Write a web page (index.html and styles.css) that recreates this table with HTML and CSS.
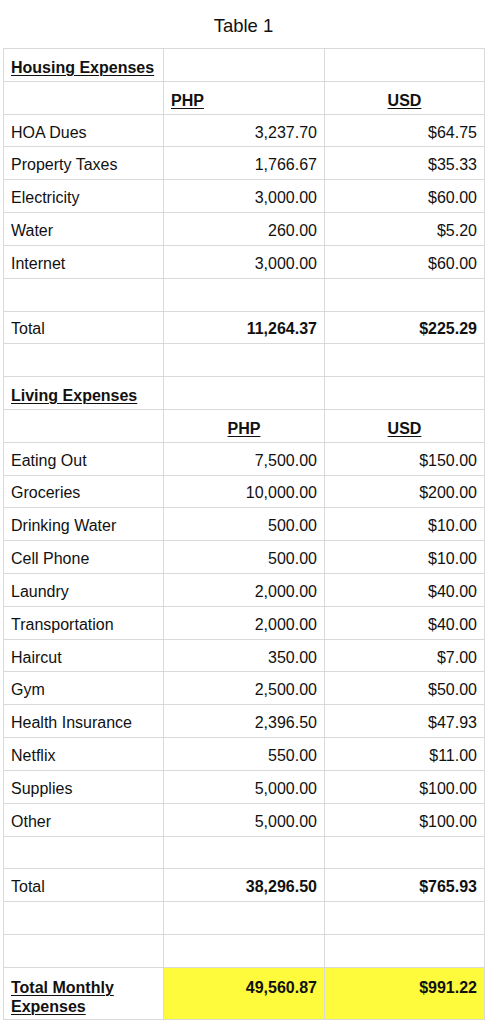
FILE: index.html
```html
<!DOCTYPE html>
<html lang="en">
<head>
<meta charset="utf-8">
<title>Table 1</title>
<link rel="stylesheet" href="styles.css">
</head>
<body>
<div class="title">Table 1</div>
<div class="sheet">
  <div class="cell head"><span class="ul">Housing Expenses</span></div>
  <div class="cell"></div>
  <div class="cell"></div>

  <div class="cell"></div>
  <div class="cell head"><span class="ul">PHP</span></div>
  <div class="cell head center"><span class="ul">USD</span></div>

  <div class="cell">HOA Dues</div>
  <div class="cell num">3,237.70</div>
  <div class="cell num">$64.75</div>

  <div class="cell">Property Taxes</div>
  <div class="cell num">1,766.67</div>
  <div class="cell num">$35.33</div>

  <div class="cell">Electricity</div>
  <div class="cell num">3,000.00</div>
  <div class="cell num">$60.00</div>

  <div class="cell">Water</div>
  <div class="cell num">260.00</div>
  <div class="cell num">$5.20</div>

  <div class="cell">Internet</div>
  <div class="cell num">3,000.00</div>
  <div class="cell num">$60.00</div>

  <div class="cell"></div>
  <div class="cell"></div>
  <div class="cell"></div>

  <div class="cell">Total</div>
  <div class="cell num bold">11,264.37</div>
  <div class="cell num bold">$225.29</div>

  <div class="cell"></div>
  <div class="cell"></div>
  <div class="cell"></div>

  <div class="cell head"><span class="ul">Living Expenses</span></div>
  <div class="cell"></div>
  <div class="cell"></div>

  <div class="cell"></div>
  <div class="cell head center"><span class="ul">PHP</span></div>
  <div class="cell head center"><span class="ul">USD</span></div>

  <div class="cell">Eating Out</div>
  <div class="cell num">7,500.00</div>
  <div class="cell num">$150.00</div>

  <div class="cell">Groceries</div>
  <div class="cell num">10,000.00</div>
  <div class="cell num">$200.00</div>

  <div class="cell">Drinking Water</div>
  <div class="cell num">500.00</div>
  <div class="cell num">$10.00</div>

  <div class="cell">Cell Phone</div>
  <div class="cell num">500.00</div>
  <div class="cell num">$10.00</div>

  <div class="cell">Laundry</div>
  <div class="cell num">2,000.00</div>
  <div class="cell num">$40.00</div>

  <div class="cell">Transportation</div>
  <div class="cell num">2,000.00</div>
  <div class="cell num">$40.00</div>

  <div class="cell">Haircut</div>
  <div class="cell num">350.00</div>
  <div class="cell num">$7.00</div>

  <div class="cell">Gym</div>
  <div class="cell num">2,500.00</div>
  <div class="cell num">$50.00</div>

  <div class="cell">Health Insurance</div>
  <div class="cell num">2,396.50</div>
  <div class="cell num">$47.93</div>

  <div class="cell">Netflix</div>
  <div class="cell num">550.00</div>
  <div class="cell num">$11.00</div>

  <div class="cell">Supplies</div>
  <div class="cell num">5,000.00</div>
  <div class="cell num">$100.00</div>

  <div class="cell">Other</div>
  <div class="cell num">5,000.00</div>
  <div class="cell num">$100.00</div>

  <div class="cell"></div>
  <div class="cell"></div>
  <div class="cell"></div>

  <div class="cell">Total</div>
  <div class="cell num bold">38,296.50</div>
  <div class="cell num bold">$765.93</div>

  <div class="cell"></div>
  <div class="cell"></div>
  <div class="cell"></div>

  <div class="cell"></div>
  <div class="cell"></div>
  <div class="cell"></div>

  <div class="cell grand head"><span class="ul">Total Monthly Expenses</span></div>
  <div class="cell grand num bold hl">49,560.87</div>
  <div class="cell grand num bold hl">$991.22</div>
</div>
</body>
</html>
```
FILE: styles.css
```css
html, body {
  margin: 0;
  padding: 0;
  background: #ffffff;
}

body {
  font-family: "Liberation Sans", Arial, Helvetica, sans-serif;
  color: #111111;
  width: 487px;
}

.title {
  box-sizing: border-box;
  height: 48px;
  padding-top: 15px;
  text-align: center;
  font-size: 18.5px;
  line-height: 21px;
}

.sheet {
  display: grid;
  grid-template-columns: 159px 160px 159px;
  grid-template-rows: repeat(28, 31.82px) 51px;
  gap: 1px;
  width: max-content;
  margin-left: 3px;
  background: #d9d9d9;
  border: 1px solid #d9d9d9;
}

.cell {
  box-sizing: border-box;
  display: flex;
  align-items: center;
  padding: 3px 7px 0 7px;
  background: #ffffff;
  font-size: 16px;
  line-height: 19px;
  white-space: nowrap;
  overflow: hidden;
}

.head {
  font-weight: bold;
  padding-top: 5px;
}

.ul {
  text-decoration: underline;
  text-decoration-thickness: 1px;
  text-underline-offset: 2px;
}

.center {
  justify-content: center;
}

.num {
  justify-content: flex-end;
}

.bold {
  font-weight: bold;
}

.grand {
  align-items: flex-start;
  padding-top: 10px;
  white-space: normal;
}

.hl {
  background: #fdfb3c;
}
```
